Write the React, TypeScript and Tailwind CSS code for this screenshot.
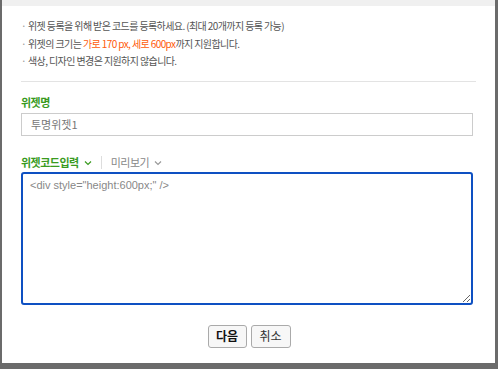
import React from 'react';

const font = { fontFamily: '"Noto Sans CJK KR", "Noto Sans", sans-serif' };

function Chevron({ color }: { color: string }) {
  return (
    <svg width="8" height="6" viewBox="0 0 8 6" className="ml-[5px]">
      <path d="M1 1.5 L4 4.5 L7 1.5" fill="none" stroke={color} strokeWidth="1.2" />
    </svg>
  );
}

export default function App() {
  const notices = [
    <>위젯 등록을 위해 받은 코드를 등록하세요. (최대 20개까지 등록 가능)</>,
    <>
      위젯의 크기는 <span className="text-[#ff5a0a]">가로 170 px, 세로 600px</span>까지 지원합니다.
    </>,
    <>색상, 디자인 변경은 지원하지 않습니다.</>,
  ];

  return (
    <div className="w-[498px] h-[369px] bg-[#6b6b6b] flex overflow-hidden" style={font}>
      <div className="ml-[2px] w-[493px] h-[363px] bg-white flex flex-col">
        <div className="h-[6px] bg-[#f0f0f0]" />

        <div className="pl-[19px] pt-[11px]">
          {/* 안내 문구 */}
          <ul className="text-[10px] leading-[17.5px] tracking-[-0.6px] text-[#555]">
            {notices.map((n, i) => (
              <li key={i} className="flex">
                <span className="w-[7px] text-[#999]">·</span>
                <span>{n}</span>
              </li>
            ))}
          </ul>

          <div className="mt-[11px] w-[455px] h-px bg-[#e3e3e3]" />

          {/* 위젯명 */}
          <div className="mt-[13px] text-[11px] leading-[14px] font-bold text-[#3a9b1f] tracking-[-0.5px]">
            위젯명
          </div>
          <div className="mt-[4px] w-[452px] h-[23px] border border-[#cccccc] flex items-center pl-[9px] text-[11px] text-[#777]">
            투명위젯1
          </div>

          {/* 탭 */}
          <div className="mt-[20px] flex items-center h-[14px] text-[11px] tracking-[-0.5px]">
            <span className="font-bold text-[#3a9b1f]">위젯코드입력</span>
            <Chevron color="#3a9b1f" />
            <span className="mx-[9px] w-px h-[13px] bg-[#dddddd]" />
            <span className="text-[#888]">미리보기</span>
            <Chevron color="#999" />
          </div>

          <textarea
            className="mt-[2px] block w-[452px] h-[133px] border-2 border-[#0e50c2] rounded-[3px] px-[7px] py-[3px] text-[11px] text-[#888] outline-none"
            style={{ fontFamily: '"Liberation Sans", Arial, sans-serif' }}
            defaultValue={'<div style="height:600px;" />'}
          />
        </div>

        {/* 버튼 */}
        <div className="mt-[20px] flex justify-center gap-[4px] pl-[1px]">
          <button className="w-[39px] h-[23px] border border-[#aaa] rounded-[3px] bg-[#f7f7f7] text-[12px] font-bold text-[#111]">
            다음
          </button>
          <button className="w-[40px] h-[23px] border border-[#aaa] rounded-[3px] bg-[#f7f7f7] text-[12px] text-[#333]">
            취소
          </button>
        </div>
      </div>
    </div>
  );
}
